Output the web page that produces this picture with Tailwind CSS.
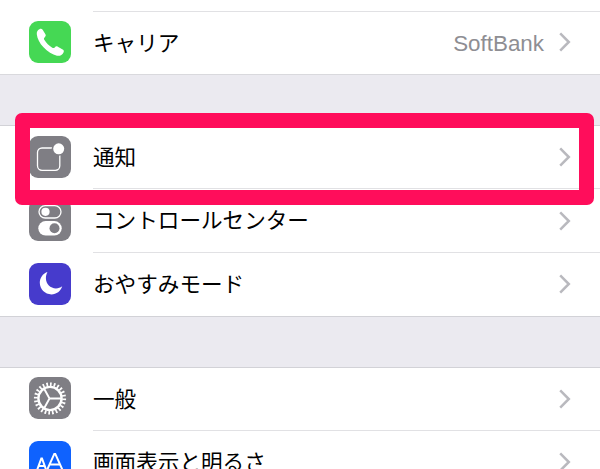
<!DOCTYPE html>
<html lang="ja">
<head>
  <meta charset="UTF-8" />
  <meta name="viewport" content="width=device-width, initial-scale=1" />
  <title>設定</title>
  <script src="https://cdn.jsdelivr.net/npm/@tailwindcss/browser@4"></script>
</head>
<body class="relative h-[469px] w-[600px] overflow-hidden bg-[#ebeaf0] font-['Liberation_Sans','Noto_Sans_CJK_JP',sans-serif] text-[21.6px] leading-none text-black">

  <!-- Chevron shared by all rows -->
  <svg class="hidden">
    <symbol id="chevron" viewBox="0 0 12 20">
      <path d="M1.2 1.4 9.8 10 1.2 18.6" fill="none" stroke="#b9b9be" stroke-width="2.5" />
    </symbol>
  </svg>

  <main>
    <section class="border-b border-[#d9d9dd] bg-white">
      <div class="ml-[93px] h-3 border-b border-[#e1e1e4]"></div>
      <div class="flex h-[62px] items-center pl-[29px] pr-[29px]">
        <svg class="mb-0.5 size-[42px] shrink-0" viewBox="0 0 42 42">
          <rect width="42" height="42" rx="9" fill="#45d854" />
          <path d="M10.4 8.2C11.8 7.5 13 7.8 13.8 9L16.4 13.3C17.1 14.5 16.7 15.4 15.6 16.4C14.8 17.2 14.8 17.9 15.3 18.8C17.2 22 20 24.7 23.3 26.7C24.3 27.3 25 27.2 25.7 26.4C26.7 25.3 27.6 24.9 28.8 25.7L33.7 28.5C34.9 29.2 35.2 30.2 34.5 31.5C33.2 34.1 30.8 35.3 28 34.7C23.5 33.8 18.5 30.5 14.5 26.3C10.6 22.2 8.2 17.4 7.8 13.2C7.6 10.8 8.5 9.1 10.4 8.2Z" fill="#fff" />
        </svg>
        <span class="ml-[22px] pt-0.5">キャリア</span>
        <span class="ml-auto mr-[15px] pt-0.5 text-[22.4px] text-[#8e8e93]">SoftBank</span>
        <svg class="mb-0.5 h-5 w-3"><use href="#chevron" /></svg>
      </div>
    </section>

    <section class="mt-[50px] border-y border-[#d2d2d7] bg-white">
      <div class="flex h-[63px] items-center pl-[29px]">
        <svg class="mb-0.5 size-[42px] shrink-0" viewBox="0 0 42 42">
          <rect width="42" height="42" rx="9" fill="#7f7e84" />
          <rect x="8.5" y="12" width="22.3" height="22.3" rx="4.5" fill="none" stroke="#fff" stroke-width="1.3" />
          <circle cx="29.7" cy="12.8" r="7" fill="#7f7e84" />
          <circle cx="29.7" cy="12.8" r="5.5" fill="#fff" />
        </svg>
        <div class="ml-[22px] flex h-full flex-1 items-center border-b border-[#e1e1e4] pr-[29px]">
          <span class="pt-0.5">通知</span>
          <svg class="ml-auto h-5 w-3"><use href="#chevron" /></svg>
        </div>
      </div>
      <div class="flex h-[64px] items-center pl-[29px]">
        <svg class="mb-0.5 size-[42px] shrink-0" viewBox="0 0 42 42">
          <rect width="42" height="42" rx="9" fill="#7f7e84" />
          <rect x="10" y="6.6" width="22" height="12.4" rx="6.2" fill="none" stroke="#fff" stroke-width="1.3" />
          <circle cx="16.5" cy="12.8" r="4.1" fill="#fff" />
          <rect x="9.3" y="22" width="23.4" height="14.6" rx="7.3" fill="#fff" />
          <circle cx="25.5" cy="29.3" r="5" fill="#7f7e84" />
        </svg>
        <div class="ml-[22px] flex h-full flex-1 items-center border-b border-[#e1e1e4] pr-[29px]">
          <span class="pt-px">コントロールセンター</span>
          <svg class="ml-auto h-5 w-3"><use href="#chevron" /></svg>
        </div>
      </div>
      <div class="flex h-[63px] items-center pl-[29px] pr-[29px]">
        <svg class="mb-0.5 size-[42px] shrink-0" viewBox="0 0 42 42">
          <rect width="42" height="42" rx="9" fill="#463bcc" />
          <path d="M18.4 9A12.2 12.2 0 0 0 18.2 9.1C13.8 10.8 10.8 15 10.8 19.8C10.8 26.2 16 31.4 22.4 31.4C27.4 31.4 31.8 28.2 33.2 23.3C31.4 24.7 29.3 25.4 27 25.4C21.4 25.4 16.9 20.9 16.9 15.3C16.9 13 17.5 10.9 18.4 9Z" fill="#fff" />
        </svg>
        <span class="ml-[22px]">おやすみモード</span>
        <svg class="mb-0.5 ml-auto h-5 w-3"><use href="#chevron" /></svg>
      </div>
    </section>

    <section class="mt-[50px] h-[102px] overflow-hidden border-t border-[#d2d2d7] bg-white">
      <div class="flex h-[63px] items-center pl-[29px]">
        <svg class="mb-1 size-[42px] shrink-0" viewBox="0 0 42 42">
          <rect width="42" height="42" rx="9" fill="#7f7e84" />
          <g fill="none" stroke="#fff">
            <!-- 24 teeth round the rim -->
            <circle cx="21" cy="21.5" r="14.2" stroke-width="3.8" pathLength="240" stroke-dasharray="4.6 5.4" />
            <circle cx="21" cy="21.5" r="11.6" stroke-width="2.4" />
            <path d="M20.5 21.5H32M20.5 21.5 15 11.5M20.5 21.5 15 31.5" stroke-width="1.9" />
          </g>
        </svg>
        <div class="ml-[22px] flex h-full flex-1 items-center border-b border-[#e1e1e4] pr-[29px]">
          <span class="pt-px">一般</span>
          <svg class="ml-auto h-5 w-3"><use href="#chevron" /></svg>
        </div>
      </div>
      <div class="flex h-[63px] items-center pl-[29px] pr-[29px]">
        <svg class="mb-0.5 size-[42px] shrink-0" viewBox="0 0 42 42">
          <rect width="42" height="42" rx="9" fill="#0f62fe" />
          <g fill="none" stroke="#fff">
            <path d="M8.3 28.5 12.3 17.4H13L17 28.5M9.7 25H15.6" stroke-width="2" />
            <path d="M18.3 28.5 25.3 12.9H26.3L33.3 28.5M20.7 23.4H30.9" stroke-width="2" />
          </g>
        </svg>
        <span class="ml-[22px]">画面表示と明るさ</span>
        <svg class="mb-0.5 ml-auto h-5 w-3"><use href="#chevron" /></svg>
      </div>
    </section>
  </main>

  <!-- Highlight frame over the 通知 row -->
  <div class="absolute left-[15px] top-[113px] h-[92px] w-[579px] rounded-[7px] border-[15px] border-[#ff0d5b]"></div>
</body>
</html>
